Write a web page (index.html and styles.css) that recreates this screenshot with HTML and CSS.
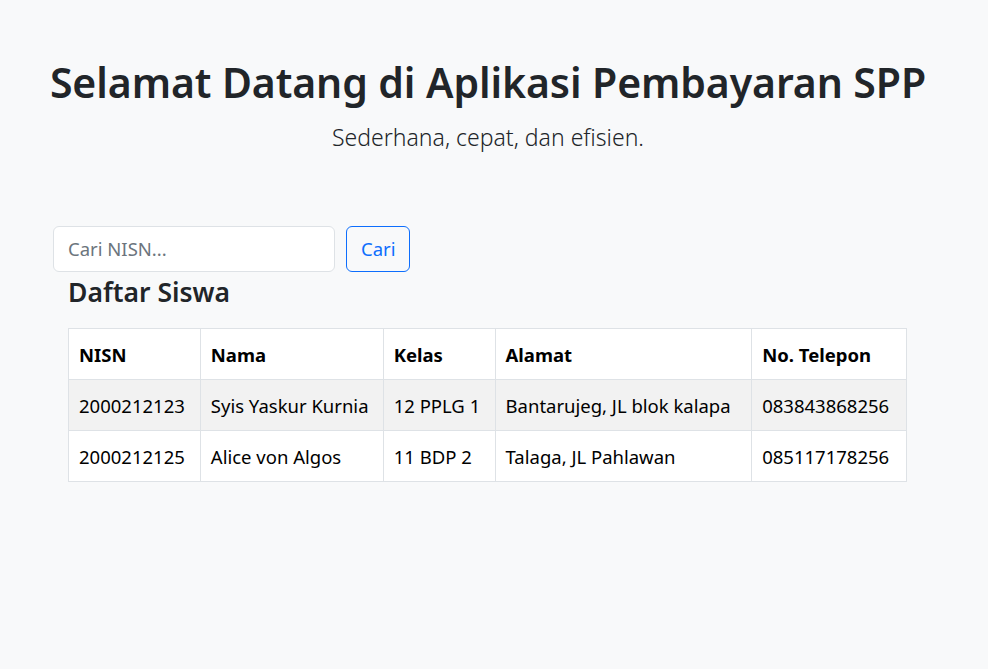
FILE: index.html
```html
<!DOCTYPE html>
<html lang="id">
<head>
<meta charset="utf-8">
<title>Aplikasi Pembayaran SPP</title>
<link rel="stylesheet" href="styles.css">
</head>
<body>
<header class="hero">
  <h1 class="hero-title">Selamat Datang di Aplikasi Pembayaran SPP</h1>
  <p class="hero-lead">Sederhana, cepat, dan efisien.</p>
</header>
<main class="content">
  <form class="search" onsubmit="return false">
    <input class="search-input" type="text" placeholder="Cari NISN...">
    <button class="search-btn" type="submit">Cari</button>
  </form>
  <section class="students">
    <h3 class="students-title">Daftar Siswa</h3>
    <table class="students-table">
      <thead>
        <tr>
          <th class="col-nisn">NISN</th>
          <th class="col-nama">Nama</th>
          <th class="col-kelas">Kelas</th>
          <th class="col-alamat">Alamat</th>
          <th class="col-telp">No. Telepon</th>
        </tr>
      </thead>
      <tbody>
        <tr class="row-striped">
          <td>2000212123</td>
          <td>Syis Yaskur Kurnia</td>
          <td>12 PPLG 1</td>
          <td>Bantarujeg, JL blok kalapa</td>
          <td>083843868256</td>
        </tr>
        <tr>
          <td>2000212125</td>
          <td>Alice von Algos</td>
          <td>11 BDP 2</td>
          <td>Talaga, JL Pahlawan</td>
          <td>085117178256</td>
        </tr>
      </tbody>
    </table>
  </section>
</main>
</body>
</html>
```

FILE: styles.css
```css
* { box-sizing: border-box; }

body {
  margin: 0;
  background: #f8f9fa;
  color: #212529;
  font-family: "Noto Sans", "Open Sans", sans-serif;
}

.hero {
  text-align: center;
  padding: 58px 12px 0 0;
}

.hero-title {
  margin: 0;
  font-size: 41px;
  font-weight: 600;
  line-height: 1.2;
  letter-spacing: -0.1px;
}

.hero-lead {
  margin: 13px 0 0;
  font-size: 23px;
  font-weight: 300;
  line-height: 1.5;
}

.content {
  padding: 71px 0 0 53px;
}

.search {
  display: flex;
  gap: 11px;
  margin: 0;
}

.search-input {
  width: 282px;
  height: 46px;
  padding: 0 14px;
  border: 1px solid #dee2e6;
  border-radius: 6px;
  background: #fff;
  font-family: inherit;
  font-size: 18.5px;
  color: #212529;
}

.search-input::placeholder { color: #6c757d; }

.search-btn {
  height: 46px;
  padding: 0 14px;
  border: 1px solid #0d6efd;
  border-radius: 6px;
  background: transparent;
  color: #0d6efd;
  font-family: inherit;
  font-size: 18.5px;
}

.students {
  padding-left: 15px;
}

.students-title {
  margin: 5px 0 20px;
  font-size: 26.5px;
  font-weight: 600;
  line-height: 1.2;
}

.students-table {
  width: 839px;
  border-collapse: collapse;
  background: #fff;
  color: #000;
  font-size: 18.5px;
}

.students-table th,
.students-table td {
  border: 1px solid #dee2e6;
  padding: 10px 10px;
  height: 51px;
  text-align: left;
  vertical-align: middle;
  line-height: 1.5;
  white-space: nowrap;
}

.students-table th { font-weight: 700; }

.row-striped td { background: #f2f2f2; }

.col-nisn { width: 132px; }
.col-nama { width: 183px; }
.col-kelas { width: 112px; }
.col-alamat { width: 257px; }
.col-telp { width: 155px; }
```
